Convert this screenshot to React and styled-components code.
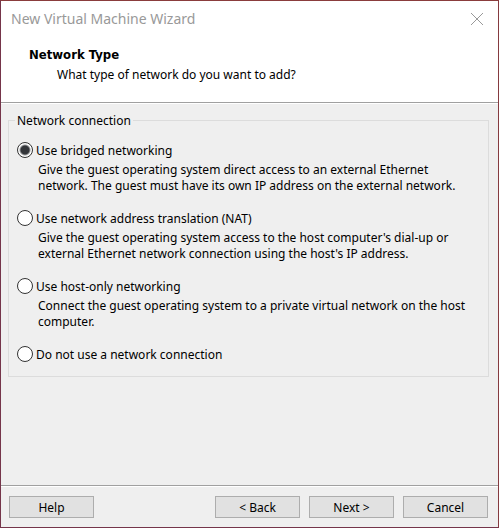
import React, { useState } from "react";
import styled, { createGlobalStyle } from "styled-components";

const GlobalStyle = createGlobalStyle`
  *, *::before, *::after { box-sizing: border-box; }
  body { margin: 0; background: #efefef; }
  body, button, input {
    font-family: "Noto Sans", "Open Sans", sans-serif;
    font-size: 12px;
    line-height: 16px;
    color: #000;
  }
`;

const Dialog = styled.form`
  display: flex;
  flex-direction: column;
  min-height: 100vh;
  background: #efefef;
  border: 1px solid #75354a;
  border-top-color: #8a3c3c;
  border-right-color: #853a3f;
`;

const Header = styled.header`
  background: #fff;
  border-bottom: 1px solid #a0a0a0;
  padding-bottom: 19px;
`;

const TitleBar = styled.div`
  display: flex;
  align-items: center;
  justify-content: space-between;
  height: 36px;
  padding: 0 15px 0 10px;
`;

const WindowTitle = styled.span`
  font-size: 14px;
  line-height: 20px;
  color: #999;
`;

const CloseButton = styled.button`
  display: flex;
  padding: 0;
  border: 0;
  background: none;
  color: #999;
`;

const Heading = styled.h1`
  margin: 10px 0 4px 28px;
  font-family: "DejaVu Sans Condensed", "DejaVu Sans", sans-serif;
  font-stretch: condensed;
  font-size: 13px;
  line-height: 16px;
  font-weight: bold;
`;

const Subheading = styled.p`
  margin: 0 0 0 56px;
`;

const Body = styled.main`
  flex: 1;
  padding: 7px 9px 8px 7px;
  border-top: 1px solid #fff;
`;

const Group = styled.fieldset`
  display: flex;
  flex-direction: column;
  gap: 16px;
  min-width: 0;
  margin: 0;
  padding: 13px 16px 14px 8px;
  border: 1px solid #dcdcdc;
`;

const Legend = styled.legend`
  margin-left: -2px;
  padding: 2px 2px 0;
`;

const Choice = styled.label`
  display: flex;
  align-items: center;
  gap: 3px;
  height: 16px;
`;

const ChoiceText = styled.span`
  padding-top: 2px;
`;

const Radio = styled.input`
  appearance: none;
  flex: none;
  width: 16px;
  height: 16px;
  margin: 0;
  border: 1px solid #333;
  border-radius: 50%;
  background: #fff;

  &:checked {
    background: radial-gradient(circle, #333539 0 4px, #fff 6px);
  }
`;

const Description = styled.p`
  margin: 4px 0 0 21px;
`;

const Footer = styled.footer`
  display: flex;
  gap: 9px;
  padding: 9px 10px 9px 8px;
  border-top: 1px solid #fff;
  box-shadow: 0 -1px #a0a0a0;
`;

const Button = styled.button`
  width: 85px;
  height: 22px;
  padding: 2px 0 0;
  border: 1px solid #adadad;
  background: #e1e1e1;
  margin-right: ${(p) => (p.$leading ? "auto" : "0")};
`;

const OPTIONS = [
  {
    id: "bridged",
    label: "Use bridged networking",
    lines: [
      "Give the guest operating system direct access to an external Ethernet",
      "network. The guest must have its own IP address on the external network.",
    ],
  },
  {
    id: "nat",
    label: "Use network address translation (NAT)",
    lines: [
      "Give the guest operating system access to the host computer's dial-up or",
      "external Ethernet network connection using the host's IP address.",
    ],
  },
  {
    id: "host-only",
    label: "Use host-only networking",
    lines: [
      "Connect the guest operating system to a private virtual network on the host",
      "computer.",
    ],
  },
  { id: "none", label: "Do not use a network connection" },
];

export default function App() {
  const [selected, setSelected] = useState("bridged");

  return (
    <>
      <GlobalStyle />
      <Dialog onSubmit={(e) => e.preventDefault()}>
        <Header>
          <TitleBar>
            <WindowTitle>New Virtual Machine Wizard</WindowTitle>
            <CloseButton type="button" aria-label="Close">
              <svg width="12" height="12" viewBox="0 0 12 12" stroke="currentColor" aria-hidden="true">
                <path d="M0 0L12 12M12 0L0 12" />
              </svg>
            </CloseButton>
          </TitleBar>
          <Heading>Network Type</Heading>
          <Subheading>What type of network do you want to add?</Subheading>
        </Header>
        <Body>
          <Group>
            <Legend>Network connection</Legend>
            {OPTIONS.map(({ id, label, lines }) => (
              <div key={id}>
                <Choice>
                  <Radio
                    type="radio"
                    name="network"
                    value={id}
                    checked={selected === id}
                    onChange={() => setSelected(id)}
                    aria-describedby={lines ? `${id}-description` : undefined}
                  />
                  <ChoiceText>{label}</ChoiceText>
                </Choice>
                {lines && (
                  <Description id={`${id}-description`}>
                    {lines[0]}
                    <br />
                    {lines[1]}
                  </Description>
                )}
              </div>
            ))}
          </Group>
        </Body>
        <Footer>
          <Button type="button" $leading>Help</Button>
          <Button type="button">&lt; Back</Button>
          <Button type="submit">Next &gt;</Button>
          <Button type="button">Cancel</Button>
        </Footer>
      </Dialog>
    </>
  );
}
